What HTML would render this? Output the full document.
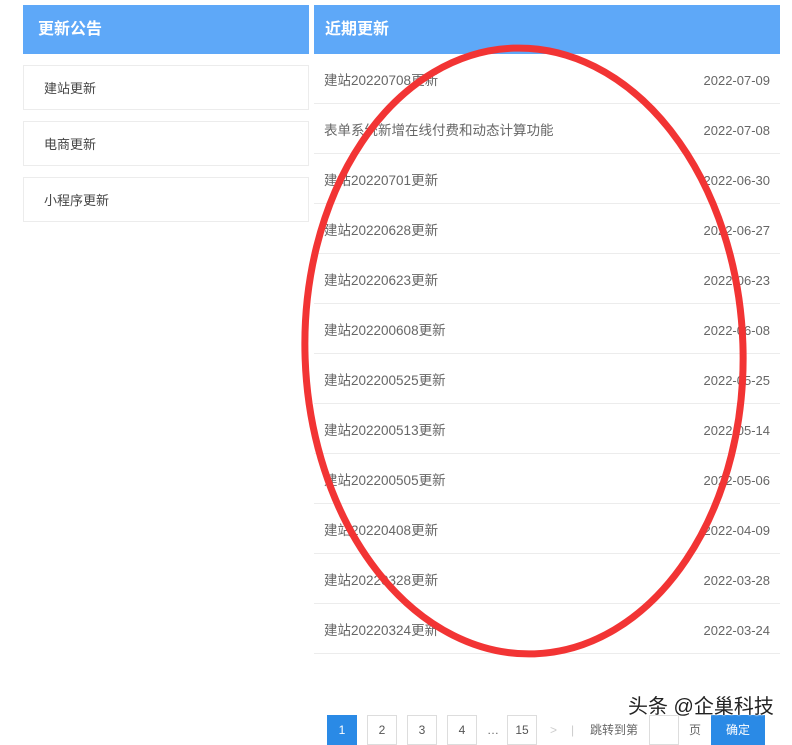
<!DOCTYPE html>
<html><head><meta charset="utf-8"><style>
*{margin:0;padding:0;box-sizing:border-box}
body{width:792px;height:734px;overflow:hidden;background:#fff;font-family:"Liberation Sans","Noto Sans CJK SC",sans-serif;position:relative;color:#555}
.h{position:absolute;top:5px;height:49px;background:#5ea8f8;color:#fff;font-size:16px;font-weight:bold;line-height:50px}
.li{position:absolute;left:23px;width:286px;height:45px;border:1px solid #ececec;font-size:13px;line-height:45px;padding-left:20px;color:#444}
.row{position:absolute;left:314px;width:466px;height:50px;border-bottom:1px solid #ececec;font-size:13.5px;line-height:53px;padding-left:10px;color:#666}
.row span{position:absolute;right:10px;top:0;font-size:13px}
.pg{position:absolute;top:715px;height:30px;border:1px solid #ddd;font-size:12px;line-height:28px;text-align:center;color:#555}
.t{position:absolute;top:715px;font-size:12px;line-height:30px;color:#666}
</style></head><body>
<div class="h" style="left:23px;width:286px;padding-left:15px">更新公告</div>
<div class="h" style="left:314px;width:466px;padding-left:11px">近期更新</div>
<div class="li" style="top:65px">建站更新</div>
<div class="li" style="top:121px">电商更新</div>
<div class="li" style="top:177px">小程序更新</div>
<div class="row" style="top:54px">建站20220708更新<span>2022-07-09</span></div>
<div class="row" style="top:104px">表单系统新增在线付费和动态计算功能<span>2022-07-08</span></div>
<div class="row" style="top:154px">建站20220701更新<span>2022-06-30</span></div>
<div class="row" style="top:204px">建站20220628更新<span>2022-06-27</span></div>
<div class="row" style="top:254px">建站20220623更新<span>2022-06-23</span></div>
<div class="row" style="top:304px">建站202200608更新<span>2022-06-08</span></div>
<div class="row" style="top:354px">建站202200525更新<span>2022-05-25</span></div>
<div class="row" style="top:404px">建站202200513更新<span>2022-05-14</span></div>
<div class="row" style="top:454px">建站202200505更新<span>2022-05-06</span></div>
<div class="row" style="top:504px">建站20220408更新<span>2022-04-09</span></div>
<div class="row" style="top:554px">建站20220328更新<span>2022-03-28</span></div>
<div class="row" style="top:604px">建站20220324更新<span>2022-03-24</span></div>
<div class="pg" style="left:327px;width:30px;background:#2a8ae6;border-color:#2a8ae6;color:#fff">1</div>
<div class="pg" style="left:367px;width:30px">2</div>
<div class="pg" style="left:407px;width:30px">3</div>
<div class="pg" style="left:447px;width:30px">4</div>
<div class="t" style="left:487px">…</div>
<div class="pg" style="left:507px;width:30px">15</div>
<div class="t" style="left:550px;color:#ccc">&gt;</div>
<div class="t" style="left:571px;color:#ccc">|</div>
<div class="t" style="left:590px">跳转到第</div>
<div class="pg" style="left:649px;width:30px"></div>
<div class="t" style="left:689px">页</div>
<div class="pg" style="left:711px;width:54px;background:#2a8ae6;border-color:#2a8ae6;color:#fff">确定</div>
<div style="position:absolute;left:628px;top:690px;font-size:20px;color:#222;text-shadow:0 0 2px #fff,0 0 2px #fff">头条 @企巢科技</div>
<svg style="position:absolute;left:0;top:0" width="792" height="734"><ellipse cx="524" cy="351" rx="219" ry="303" transform="rotate(-2 524 351)" fill="none" stroke="#f23434" stroke-width="7"/></svg>
</body></html>
